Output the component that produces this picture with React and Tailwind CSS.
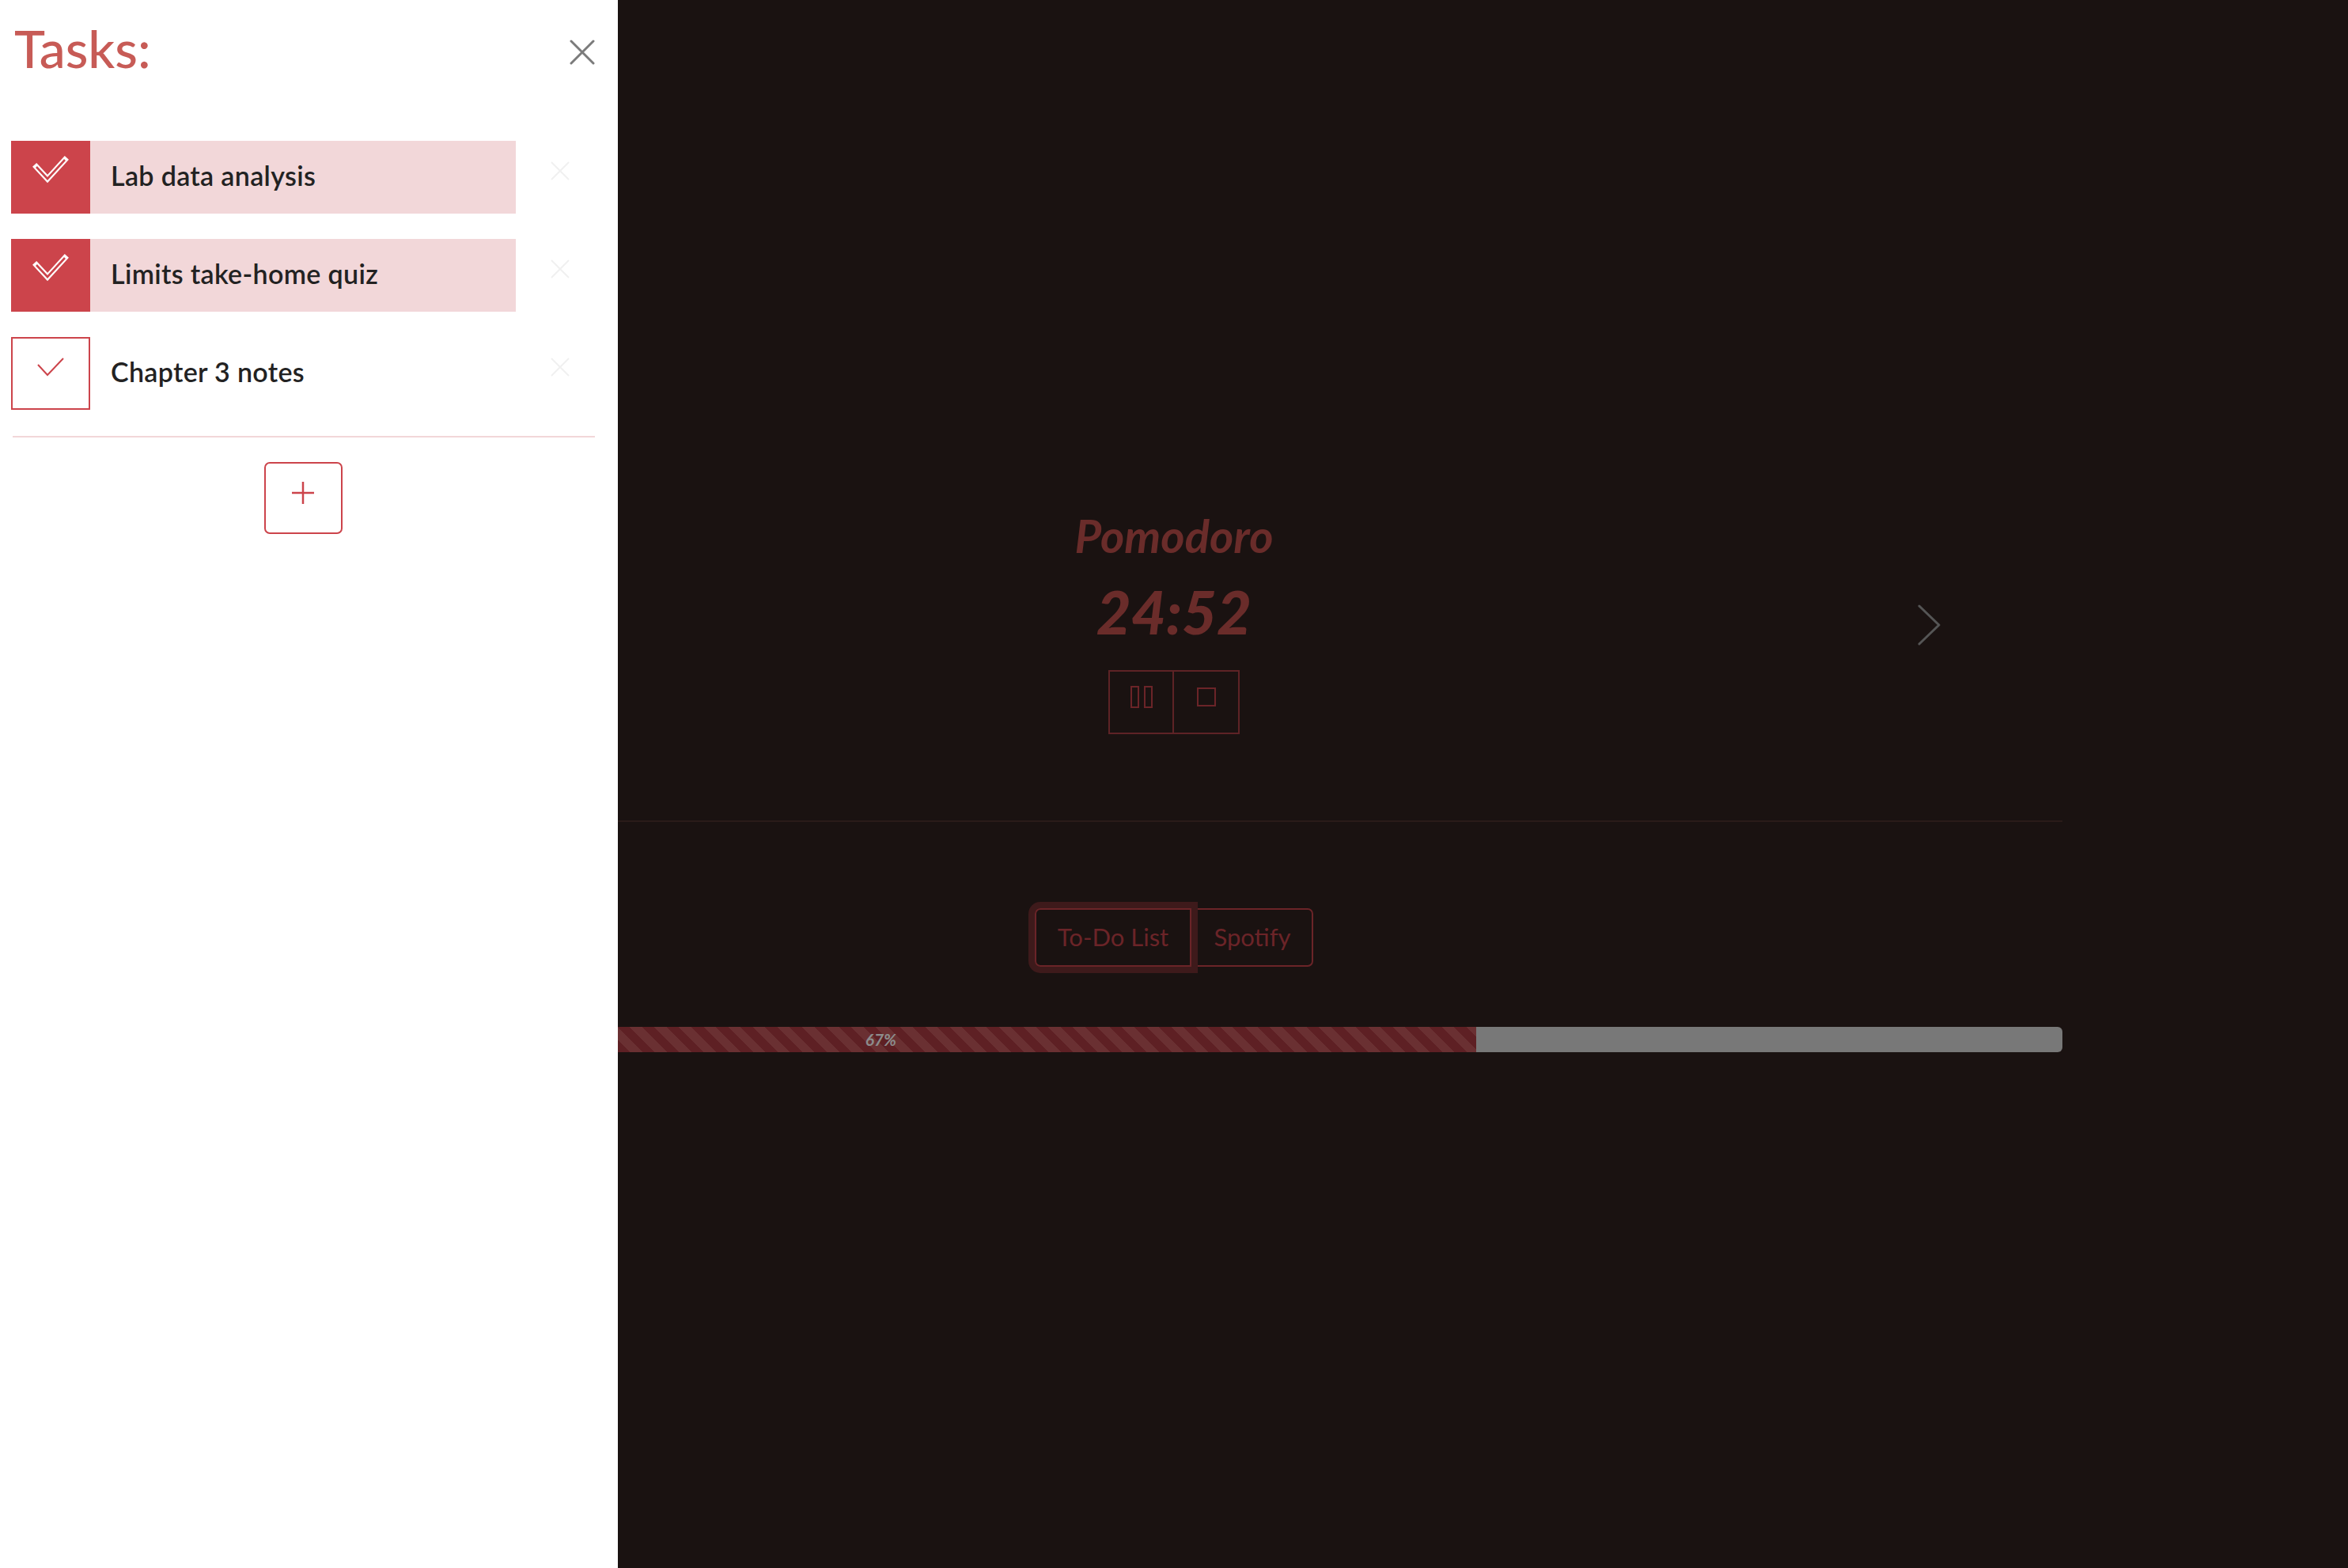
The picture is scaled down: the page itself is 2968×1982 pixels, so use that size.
import React from "react";

const tasks = [
  { id: 1, title: "Lab data analysis", done: true },
  { id: 2, title: "Limits take-home quiz", done: true },
  { id: 3, title: "Chapter 3 notes", done: false },
];

function DoneCheck() {
  return (
    <svg width="48" height="40" viewBox="0 0 48 40" className="-mt-[16px]" fill="none">
      <path d="M6 15 L20 30 L42 6" stroke="#ffffff" strokeWidth="7" strokeLinecap="square" />
      <path d="M6 15 L20 30 L42 6" stroke="#cc444b" strokeWidth="2.6" />
    </svg>
  );
}

function OpenCheck() {
  return (
    <svg width="36" height="26" viewBox="0 0 36 26" className="-mt-[16px]" fill="none">
      <path d="M2 10 L14 23 L34 2" stroke="#cc444b" strokeWidth="2" />
    </svg>
  );
}

function TaskRow({ task }) {
  return (
    <div className="flex h-[92px] items-stretch">
      <div
        className={`flex w-[639px] items-stretch ${
          task.done ? "bg-[#f2d7d9]" : "bg-white"
        }`}
      >
        <div
          className={`flex w-[100px] shrink-0 items-center justify-center ${
            task.done ? "bg-[#cc444b]" : "border-2 border-[#cc444b] bg-white"
          }`}
        >
          {task.done ? <DoneCheck /> : <OpenCheck />}
        </div>
        <p className="-mt-[5px] flex items-center pl-[26px] text-[34px] font-semibold tracking-[0.01em] text-[#222222]">
          {task.title}
        </p>
      </div>
      <button type="button" className="flex w-[100px] items-center justify-center pl-[12px]">
        <svg width="26" height="26" viewBox="0 0 26 26" className="-mt-[16px]" fill="none">
          <path d="M2 2 L24 24 M24 2 L2 24" stroke="#f0f0f0" strokeWidth="2" />
        </svg>
      </button>
    </div>
  );
}

function TaskDrawer() {
  return (
    <aside className="absolute inset-y-0 left-0 z-20 w-[781px] bg-white pl-[14px] pr-[29px]">
      <div className="flex items-start justify-between pt-[21px]">
        <h2 className="ml-[4px] text-[66px] font-medium leading-[1.2] text-[#c75b56]">Tasks:</h2>
        <button type="button" className="mt-[29px]">
          <svg width="32" height="32" viewBox="0 0 32 32" fill="none">
            <path d="M2 2 L30 30 M30 2 L2 30" stroke="#7b7b7b" strokeWidth="3" strokeLinecap="round" />
          </svg>
        </button>
      </div>

      <div className="mt-[78px] flex flex-col gap-[32px]">
        {tasks.map((task) => (
          <TaskRow key={task.id} task={task} />
        ))}
      </div>

      <div className="ml-[2px] mt-[33px] h-[2px] bg-[#f2d7d9]" />

      <div className="mt-[31px] flex justify-center">
        <button
          type="button"
          className="flex h-[91px] w-[99px] items-center justify-center rounded-[7px] border-2 border-[#cc444b]"
        >
          <svg width="30" height="30" viewBox="0 0 30 30" className="-mt-[14px]" fill="none">
            <path d="M15 1 L15 29 M1 15 L29 15" stroke="#cc444b" strokeWidth="2.5" />
          </svg>
        </button>
      </div>
    </aside>
  );
}

export default function App() {
  const progress = 67;

  return (
    <div className="relative min-h-screen overflow-hidden bg-[#1a1211] font-[Lato,sans-serif]">
      <main className="mx-auto flex w-[2246px] flex-col pt-[642px]">
        <section className="flex items-center">
          <div className="w-[336px]" />
          <div className="flex flex-1 flex-col items-center">
            <h1 className="text-[58px] font-bold italic leading-[1.2] text-[#6a2c2a]">Pomodoro</h1>
            <p className="mt-[23px] text-[76px] font-black italic leading-none text-[#6a2c2a]">24:52</p>
            <div className="mt-[36px] flex">
              <button
                type="button"
                className="flex h-[81px] w-[83px] items-center justify-center border-2 border-[#5e2326]"
              >
                <span className="-mt-[12px] flex gap-[6px]">
                  <span className="h-[28px] w-[11px] border-2 border-[#6b2428]" />
                  <span className="h-[28px] w-[11px] border-2 border-[#6b2428]" />
                </span>
              </button>
              <button
                type="button"
                className="-ml-[2px] flex h-[81px] w-[85px] items-center justify-center border-2 border-[#5e2326]"
              >
                <span className="-mt-[12px] h-[24px] w-[24px] border-2 border-[#6b2428]" />
              </button>
            </div>
          </div>
          <div className="flex w-[336px] justify-center">
            <button type="button" className="mt-[10px]">
              <svg width="32" height="54" viewBox="0 0 32 54" fill="none">
                <path d="M3 3 L28 27 L3 51" stroke="#555555" strokeWidth="3" strokeLinecap="round" strokeLinejoin="round" />
              </svg>
            </button>
          </div>
        </section>

        <div className="mt-[109px] h-[2px] bg-[#2a1b19]" />

        <div className="mt-[109px] flex justify-center">
          <button
            type="button"
            className="relative z-10 h-[74px] w-[198px] rounded-l-[7px] border-2 border-[#6b2428] text-[31px] text-[#6b2428] shadow-[0_0_0_8px_#3e1a1b]"
          >
            To-Do List
          </button>
          <button
            type="button"
            className="h-[74px] w-[154px] rounded-r-[7px] border-2 border-[#6b2428] text-[31px] text-[#6b2428]"
          >
            Spotify
          </button>
        </div>

        <div className="mt-[76px] flex h-[32px] overflow-hidden rounded-[6px] bg-[#787878]">
          <div
            className="flex items-center justify-center bg-[repeating-linear-gradient(45deg,#6a3032_0_11px,#5e2024_11px_22px)]"
            style={{ width: `${progress}%` }}
          >
            <span className="text-[21px] font-bold italic text-[#8c8c8c]">{progress}%</span>
          </div>
        </div>
      </main>

      <TaskDrawer />
    </div>
  );
}
